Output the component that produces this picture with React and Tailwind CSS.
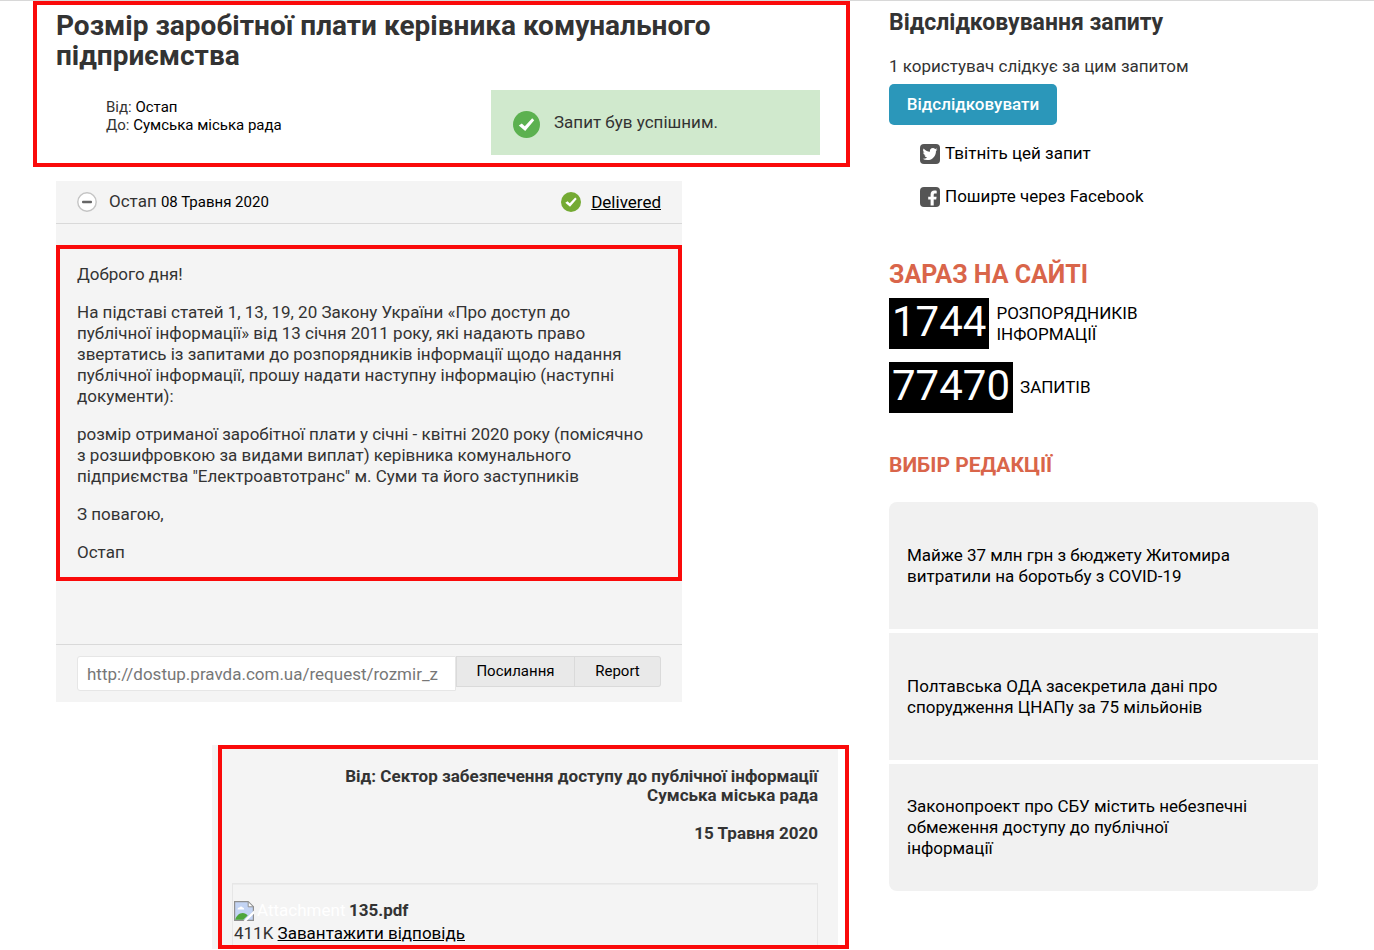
import React, { useState } from 'react';

// Line breaks are kept as the sender typed them
const message = [
  'Доброго дня!',
  'На підставі статей 1, 13, 19, 20 Закону України «Про доступ до\nпублічної інформації» від 13 січня 2011 року, які надають право\nзвертатись із запитами до розпорядників інформації щодо надання\nпублічної інформації, прошу надати наступну інформацію (наступні\nдокументи):',
  'розмір отриманої заробітної плати у січні - квітні 2020 року (помісячно\nз розшифровкою за видами виплат) керівника комунального\nпідприємства "Електроавтотранс" м. Суми та його заступників',
  'З повагою,',
  'Остап',
];

const counters = [
  { value: '1744', label: 'РОЗПОРЯДНИКІВ ІНФОРМАЦІЇ' },
  { value: '77470', label: 'ЗАПИТІВ' },
];

const picks = [
  'Майже 37 млн грн з бюджету Житомира витратили на боротьбу з COVID-19',
  'Полтавська ОДА засекретила дані про спорудження ЦНАПу за 75 мільйонів',
  'Законопроект про СБУ містить небезпечні обмеження доступу до публічної інформації',
];

function CheckCircle({ className }) {
  return (
    <svg viewBox="0 0 27 27" className={className} aria-hidden="true">
      <circle cx="13.5" cy="13.5" r="13.5" fill="currentColor" />
      <path d="M5.8 14.6 8.8 12.4l3 2.8 7.4-7.9 2 2L12.2 20z" fill="#fff" />
    </svg>
  );
}

function MinusCircle() {
  return (
    <svg viewBox="0 0 20 20" className="h-5 w-5" aria-hidden="true">
      <circle cx="10" cy="10" r="9.2" fill="#fff" stroke="#c4c4c4" strokeWidth="1.4" />
      <rect x="5" y="8.7" width="10" height="2.6" rx="1" fill="#666" />
    </svg>
  );
}

function TwitterIcon() {
  return (
    <svg viewBox="0 0 20 20" className="h-5 w-5 shrink-0" aria-hidden="true">
      <rect width="20" height="20" rx="4" fill="#555" />
      <path
        transform="translate(2.6 2.6) scale(.62)"
        fill="#fff"
        d="M23.95 4.57a10 10 0 0 1-2.82.77 4.96 4.96 0 0 0 2.16-2.72c-.95.55-2 .96-3.13 1.18a4.92 4.92 0 0 0-8.38 4.48C7.69 8.1 4.07 6.13 1.64 3.16a4.92 4.92 0 0 0 1.52 6.57 4.9 4.9 0 0 1-2.23-.61v.06c0 2.38 1.7 4.37 3.95 4.82a5 5 0 0 1-2.21.09 4.94 4.94 0 0 0 4.6 3.42A9.87 9.87 0 0 1 0 19.54a13.99 13.99 0 0 0 7.55 2.21c9.05 0 14-7.5 14-13.98 0-.21 0-.42-.02-.63a9.94 9.94 0 0 0 2.42-2.57z"
      />
    </svg>
  );
}

function FacebookIcon() {
  return (
    <svg viewBox="0 0 20 20" className="h-5 w-5 shrink-0" aria-hidden="true">
      <rect width="20" height="20" rx="4" fill="#555" />
      <path
        d="M10.6 18.6v-6H8.2V9.7h2.4V7.6c0-2.6 1.5-4 3.8-4 1.1 0 2 .1 2.3.2v2.6h-1.5c-1.3 0-1.5.6-1.5 1.5v1.8h2.9l-.4 2.9h-2.5v6z"
        fill="#fff"
      />
    </svg>
  );
}

function BrokenImage() {
  return (
    <svg viewBox="0 0 20 20" className="h-5 w-5 shrink-0" aria-hidden="true">
      <path d="M.6.6h13.6l5.2 5.2v13.6H.6z" fill="#c3d4f4" stroke="#8f8f8f" strokeWidth="1.2" />
      <path d="M14.2.6v5.2h5.2z" fill="#fff" stroke="#8f8f8f" />
      <path d="M3.5 8.5c0-1.4 1-2 2-2 .5-1.2 2.6-1.2 3.1 0 1 0 1.7.8 1.5 2z" fill="#fff" />
      <path d="M1.2 18.8c1-4 4-6.8 7.5-6.8 2 0 3.8 1 5 2.5l-4.5 4.3z" fill="#4ea63c" />
      <path d="M20 9.5 9.5 20h3L20 12.8z" fill="#fff" />
    </svg>
  );
}

function RequestHeader() {
  return (
    <header className="border-4 border-[#fa0a0a] px-[19px] pt-[6px] pb-2">
      <h1 className="text-[28px] leading-[30px] font-bold text-[#333]">
        Розмір заробітної плати керівника комунального підприємства
      </h1>
      <div className="mt-[19px] flex items-start justify-between pr-[7px]">
        <p className="pt-2 pl-[50px] text-[15px] leading-[18px]">
          <span className="text-[#333]">Від:</span> <a href="#ostap">Остап</a>
          <br />
          <span className="text-[#333]">До:</span> <a href="#sumy">Сумська міська рада</a>
        </p>
        <div className="flex h-[65px] w-[329px] items-center gap-[14px] bg-[#d0e9cd] px-[22px] text-[#333]">
          <CheckCircle className="mt-1 h-[27px] w-[27px] text-[#5cb150]" />
          <p>Запит був успішним.</p>
        </div>
      </div>
    </header>
  );
}

function OutgoingMessage() {
  const [open, setOpen] = useState(true);

  return (
    <article className="mt-[14px] mr-[168px] ml-[23px] bg-[#f4f4f4]">
      <div className="flex h-[43px] items-center border-b border-[#d9d9d9] px-[21px]">
        <button type="button" aria-label="Згорнути" onClick={() => setOpen(!open)}>
          <MinusCircle />
        </button>
        <p className="ml-3 text-[#333]">
          Остап <a href="#message" className="text-[15px] text-black">08 Травня 2020</a>
        </p>
        <CheckCircle className="ml-auto h-5 w-5 text-[#74aa33]" />
        <a href="#delivered" className="ml-[10px] underline">Delivered</a>
      </div>

      {open && (
        <div className="mt-[21px] border-4 border-[#fa0a0a] px-[17px] pt-[15px] pb-[14px] text-[#333]">
          {message.map((text) => (
            <p key={text} className="mb-[17px] whitespace-pre-line last:mb-0">{text}</p>
          ))}
        </div>
      )}

      <div className="mt-[63px] flex items-start border-t border-[#d9d9d9] px-[21px] pt-[11px] pb-[11px]">
        <input
          type="text"
          aria-label="Посилання на запит"
          readOnly
          value="http://dostup.pravda.com.ua/request/rozmir_z"
          className="h-[35px] min-w-0 flex-1 rounded-l-[3px] border border-[#e6e6e6] bg-white px-[9px] text-[#777]"
        />
        <button type="button" className="h-[31px] w-[119px] border border-[#dadada] bg-[#e9e9e9] text-[15px]">
          Посилання
        </button>
        <button type="button" className="h-[31px] w-[86px] rounded-r-[3px] border border-l-0 border-[#dadada] bg-[#e9e9e9] text-[15px]">
          Report
        </button>
      </div>
    </article>
  );
}

function Response() {
  return (
    <article className="relative mt-[43px] mr-3 ml-[179px] bg-[#f4f4f4] px-5 pt-[22px] text-[#333]">
      <h2 className="text-right leading-[19px] font-bold">
        Від: Сектор забезпечення доступу до публічної інформації
        <br />
        Сумська міська рада
      </h2>
      <p className="mt-[19px] text-right leading-[19px] font-bold">15 Травня 2020</p>

      <div className="mt-10 border border-b-0 border-[#e6e6e6]">
        <div className="border-t border-[#ececec] pt-[14px] pb-1 pl-px">
          <div className="flex h-[23px] items-center">
            <BrokenImage />
            <span className="w-[90px] pl-[3px] text-white">Attachment</span>
            <strong className="ml-[5px]">135.pdf</strong>
          </div>
          <p className="leading-[23px]">
            411K <a href="#download" className="text-black underline">Завантажити відповідь</a>
          </p>
        </div>
      </div>

      {/* Highlight frame over the card */}
      <div className="pointer-events-none absolute inset-y-0 -right-[11px] left-[6px] border-4 border-[#fa0a0a]" />
    </article>
  );
}

function Sidebar() {
  return (
    <aside className="pt-[9px]">
      <h2 className="text-[23px] leading-[26px] font-bold text-[#333]">Відслідковування запиту</h2>
      <p className="mt-5 text-[#333]">1 користувач слідкує за цим запитом</p>
      <button type="button" className="mt-[7px] h-[41px] w-[168px] rounded-[5px] bg-[#2b97ba] font-medium text-white">
        Відслідковувати
      </button>

      <ul className="mt-[18px] ml-[31px] space-y-[22px]">
        <li>
          <a href="#twitter" className="flex items-center gap-[5px]">
            <TwitterIcon />
            Твітніть цей запит
          </a>
        </li>
        <li>
          <a href="#facebook" className="flex items-center gap-[5px]">
            <FacebookIcon />
            Поширте через Facebook
          </a>
        </li>
      </ul>

      <h2 className="mt-[53px] text-[25px] leading-[30px] font-bold text-[#d9654a]">ЗАРАЗ НА САЙТІ</h2>
      <div className="mt-2 space-y-[13px]">
        {counters.map((item) => (
          <a key={item.value} href="#stats" className="flex items-center gap-[7px]">
            <span className="h-[51px] bg-black px-[3px] text-[42px] leading-[48px] text-white">{item.value}</span>
            <span className="w-[150px]">{item.label}</span>
          </a>
        ))}
      </div>

      <h2 className="mt-[39px] text-[21px] leading-[26px] font-bold text-[#d9654a]">ВИБІР РЕДАКЦІЇ</h2>
      <ul className="mt-6 space-y-1 overflow-hidden rounded-lg">
        {picks.map((text) => (
          <li key={text}>
            <a href="#pick" className="flex h-[127px] items-center bg-[#f1f1f1] pr-16 pl-[18px]">{text}</a>
          </li>
        ))}
      </ul>
    </aside>
  );
}

export default function App() {
  return (
    <div className="grid grid-cols-[minmax(0,817fr)_minmax(0,429fr)] gap-x-[39px] border-t border-[#d8d8d8] bg-white pr-14 pl-[33px] font-[Roboto,sans-serif] text-[17px] leading-[21px] text-black">
      <main>
        <RequestHeader />
        <OutgoingMessage />
        <Response />
      </main>
      <Sidebar />
    </div>
  );
}
